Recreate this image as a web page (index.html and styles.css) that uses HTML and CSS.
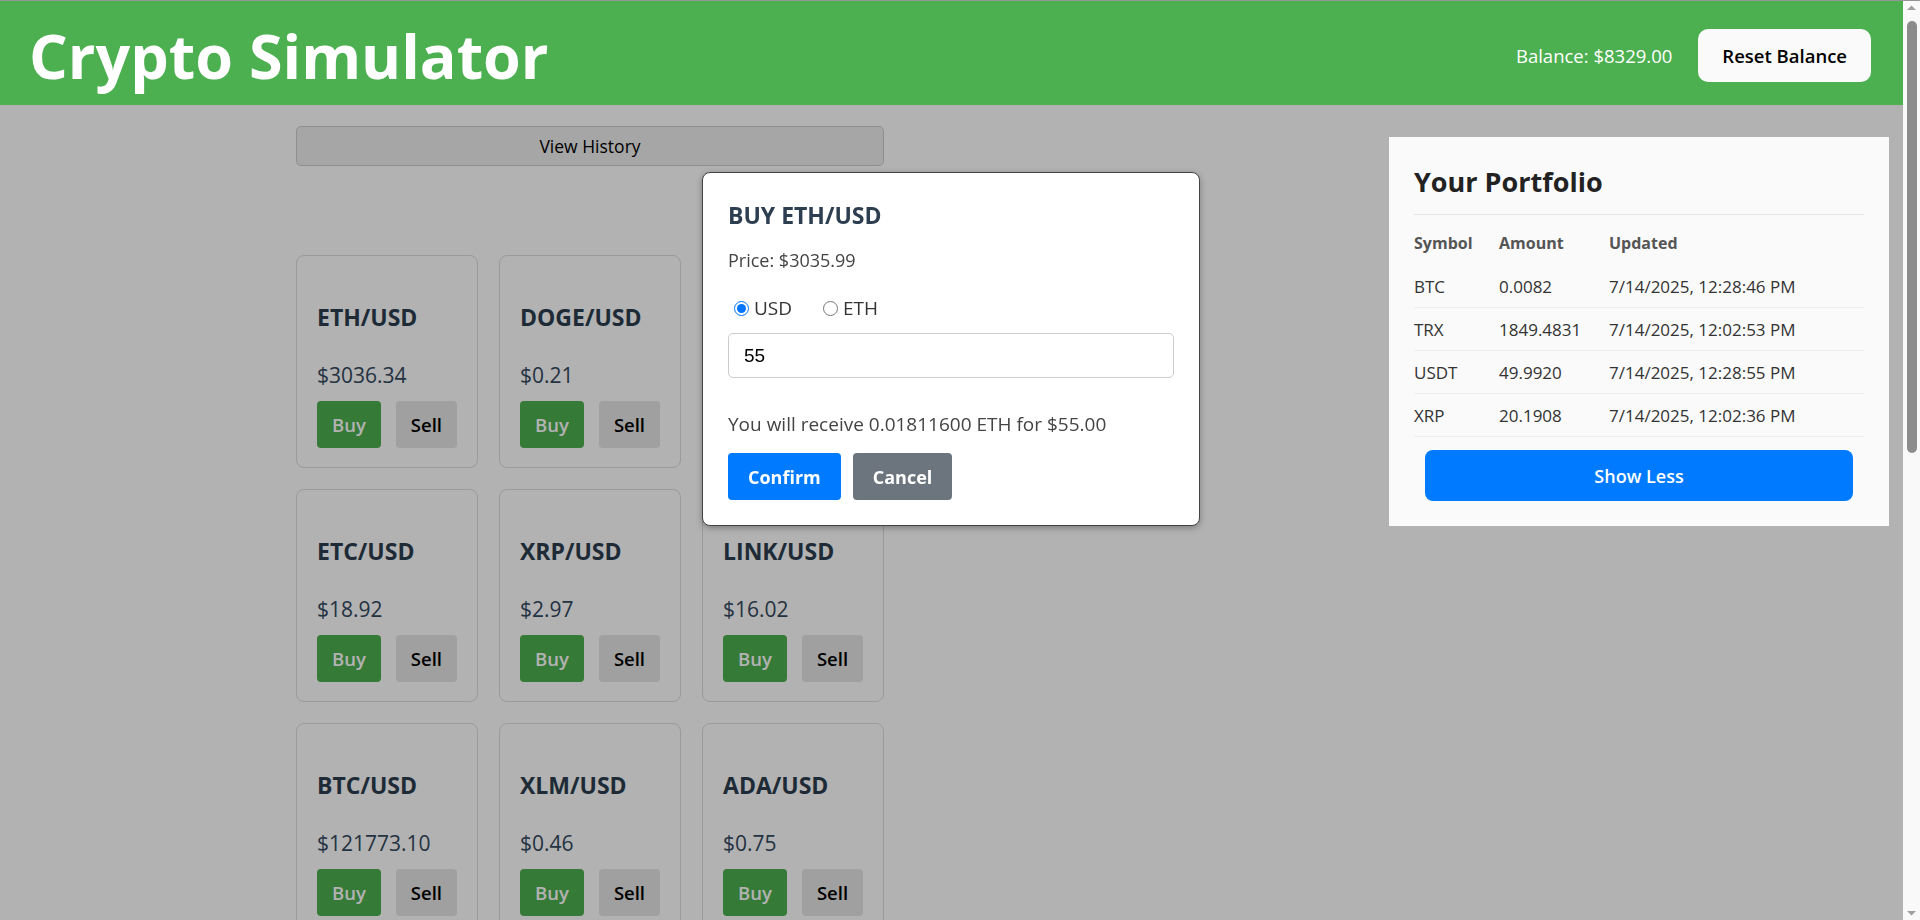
FILE: index.html
```html
<!DOCTYPE html>
<html lang="en">
<head>
<meta charset="utf-8">
<title>Crypto Simulator</title>
<link rel="stylesheet" href="styles.css">
</head>
<body>
<div class="page">
  <header class="topbar">
    <h1 class="brand">Crypto Simulator</h1>
    <div class="account">
      <span class="balance">Balance: $8329.00</span>
      <button class="btn-reset">Reset Balance</button>
    </div>
  </header>

  <div class="layout">
    <section class="market">
      <button class="btn-history">View History</button>
      <div class="cards">
        <div class="card"><h2 class="pair">ETH/USD</h2><p class="price">$3036.34</p><div class="actions"><button class="btn-buy">Buy</button><button class="btn-sell">Sell</button></div></div>
        <div class="card"><h2 class="pair">DOGE/USD</h2><p class="price">$0.21</p><div class="actions"><button class="btn-buy">Buy</button><button class="btn-sell">Sell</button></div></div>
        <div class="card"></div>
        <div class="card"><h2 class="pair">ETC/USD</h2><p class="price">$18.92</p><div class="actions"><button class="btn-buy">Buy</button><button class="btn-sell">Sell</button></div></div>
        <div class="card"><h2 class="pair">XRP/USD</h2><p class="price">$2.97</p><div class="actions"><button class="btn-buy">Buy</button><button class="btn-sell">Sell</button></div></div>
        <div class="card"><h2 class="pair">LINK/USD</h2><p class="price">$16.02</p><div class="actions"><button class="btn-buy">Buy</button><button class="btn-sell">Sell</button></div></div>
        <div class="card"><h2 class="pair">BTC/USD</h2><p class="price">$121773.10</p><div class="actions"><button class="btn-buy">Buy</button><button class="btn-sell">Sell</button></div></div>
        <div class="card"><h2 class="pair">XLM/USD</h2><p class="price">$0.46</p><div class="actions"><button class="btn-buy">Buy</button><button class="btn-sell">Sell</button></div></div>
        <div class="card"><h2 class="pair">ADA/USD</h2><p class="price">$0.75</p><div class="actions"><button class="btn-buy">Buy</button><button class="btn-sell">Sell</button></div></div>
      </div>
    </section>

    <aside class="portfolio">
      <h2 class="pf-title">Your Portfolio</h2>
      <div class="pf-table">
        <div class="pf-row pf-head"><span>Symbol</span><span>Amount</span><span>Updated</span></div>
        <div class="pf-row"><span>BTC</span><span>0.0082</span><span>7/14/2025, 12:28:46 PM</span></div>
        <div class="pf-row"><span>TRX</span><span>1849.4831</span><span>7/14/2025, 12:02:53 PM</span></div>
        <div class="pf-row"><span>USDT</span><span>49.9920</span><span>7/14/2025, 12:28:55 PM</span></div>
        <div class="pf-row"><span>XRP</span><span>20.1908</span><span>7/14/2025, 12:02:36 PM</span></div>
      </div>
      <button class="btn-less">Show Less</button>
    </aside>
  </div>
</div>

<div class="backdrop"></div>

<div class="modal">
  <h3 class="modal-title">BUY ETH/USD</h3>
  <p class="modal-price">Price: $3035.99</p>
  <div class="modal-opts">
    <label class="opt"><input type="radio" name="unit" checked> USD</label>
    <label class="opt"><input type="radio" name="unit"> ETH</label>
  </div>
  <input class="modal-input" type="text" value="55">
  <p class="modal-receive">You will receive 0.01811600 ETH for $55.00</p>
  <div class="modal-actions">
    <button class="btn-confirm">Confirm</button>
    <button class="btn-cancel">Cancel</button>
  </div>
</div>

<div class="scrollbar" aria-hidden="true">
  <svg class="sb-arrow" width="17" height="14" viewBox="0 0 17 14"><polygon points="4,9 8.5,4.5 13,9" fill="#a0a0a0"/></svg>
  <div class="sb-thumb"></div>
  <svg class="sb-arrow sb-down" width="17" height="14" viewBox="0 0 17 14"><polygon points="4,5 8.5,9.5 13,5" fill="#a0a0a0"/></svg>
</div>
</body>
</html>
```

FILE: styles.css
```css
html {
  border-top: 1px solid #d4d4d4;
}

body {
  margin: 0;
  font-family: "Open Sans", "Noto Sans", sans-serif;
  background: #ffffff;
  color: #333;
}

button {
  font-family: "Open Sans", "Noto Sans", sans-serif;
  cursor: pointer;
}

.page {
  width: 1903px;
}

/* ---------- top bar ---------- */
.topbar {
  position: relative;
  z-index: 20;
  height: 104px;
  box-sizing: border-box;
  padding: 5px 32px 0 29px;
  background: #4CAF50;
  display: flex;
  align-items: center;
  justify-content: space-between;
}

.brand {
  margin: 0;
  color: #fff;
  font-size: 61px;
  font-weight: 700;
  line-height: 1;
}

.account {
  display: flex;
  align-items: center;
  gap: 26px;
}

.balance {
  color: #fff;
  font-size: 18.5px;
}

.btn-reset {
  height: 53px;
  padding: 0 24px;
  border: none;
  border-radius: 10px;
  background: #fafafa;
  color: #000;
  font-size: 18.5px;
  font-weight: 600;
}

/* ---------- layout ---------- */
.layout {
  padding: 0 14px 0 296px;
  display: flex;
  align-items: flex-start;
  justify-content: space-between;
}

.market {
  width: 588px;
  padding-top: 21px;
}

.btn-history {
  display: block;
  width: 100%;
  height: 40px;
  border: 1px solid #cccccc;
  border-radius: 5px;
  background: #eeeeee;
  color: #000;
  font-size: 17.5px;
}

.cards {
  margin-top: 89px;
  display: grid;
  grid-template-columns: repeat(3, 1fr);
  gap: 21px;
}

.card {
  border: 1px solid #dddddd;
  border-radius: 8px;
  background: #fff;
  padding: 20px 20px 19px;
}

.pair {
  margin: 26px 0 0;
  font-size: 23px;
  line-height: 30px;
  font-weight: 700;
  color: #2c3e50;
}

.price {
  margin: 29px 0 0;
  font-size: 21px;
  line-height: 28px;
  color: #34495e;
}

.actions {
  margin-top: 12px;
  display: flex;
  gap: 15px;
}

.btn-buy,
.btn-sell {
  height: 47px;
  padding: 0 15px;
  border: none;
  border-radius: 4px;
  font-size: 18.5px;
  font-weight: 600;
}

.btn-buy {
  background: #4CAF50;
  color: #fff;
}

.btn-sell {
  background: #e5e5e5;
  color: #000;
}

/* ---------- portfolio ---------- */
.portfolio {
  position: relative;
  z-index: 20;
  width: 500px;
  box-sizing: border-box;
  margin-top: 32px;
  padding: 25px;
  background: #fafafa;
}

.pf-title {
  margin: 0;
  padding-bottom: 12px;
  border-bottom: 1px solid #e6e6e6;
  font-size: 27px;
  line-height: 40px;
  font-weight: 700;
  color: #222;
}

.pf-table {
  margin-top: 6px;
}

.pf-row {
  display: grid;
  grid-template-columns: 85px 110px 1fr;
  padding-top: 2px;
  line-height: 40px;
  font-size: 17px;
  color: #333;
  border-bottom: 1px solid #eeeeee;
}

.pf-head {
  padding-bottom: 2px;
  border-bottom: none;
  font-size: 16px;
  font-weight: 700;
  color: #555;
}

.btn-less {
  display: block;
  width: 95%;
  height: 51px;
  margin: 13px auto 0;
  border: none;
  border-radius: 8px;
  background: #007bff;
  color: #fff;
  font-size: 18px;
  font-weight: 600;
}

/* ---------- modal ---------- */
.backdrop {
  position: fixed;
  inset: 0;
  z-index: 10;
  background: rgba(0, 0, 0, 0.3);
}

.modal {
  position: fixed;
  z-index: 30;
  top: 172px;
  left: 702px;
  width: 498px;
  box-sizing: border-box;
  padding: 25px;
  border: 1px solid #444;
  border-radius: 8px;
  background: #fff;
  box-shadow: 0 2px 6px rgba(0, 0, 0, 0.3);
}

.modal-title {
  margin: 3px 0 0;
  font-size: 23px;
  line-height: 28px;
  font-weight: 700;
  color: #2c3e50;
}

.modal-price {
  margin: 19px 0 0;
  font-size: 18px;
  line-height: 24px;
  color: #444;
}

.modal-opts {
  margin-top: 24px;
  display: flex;
  gap: 25px;
  font-size: 19px;
  line-height: 24px;
  color: #333;
}

.opt {
  display: flex;
  align-items: center;
}

.opt input {
  width: 15px;
  height: 15px;
  margin: 0 5px 0 6px;
  accent-color: #0075ff;
}

.modal-input {
  display: block;
  width: 100%;
  height: 45px;
  box-sizing: border-box;
  margin-top: 13px;
  padding: 0 15px;
  border: 1px solid #cccccc;
  border-radius: 5px;
  font-family: "Liberation Sans", Arial, sans-serif;
  font-size: 19px;
  color: #000;
}

.modal-receive {
  margin: 34px 0 0;
  font-size: 19px;
  line-height: 24px;
  color: #444;
}

.modal-actions {
  margin-top: 17px;
  display: flex;
  gap: 12px;
}

.btn-confirm,
.btn-cancel {
  height: 47px;
  padding: 0 20px;
  border: none;
  border-radius: 4px;
  color: #fff;
  font-size: 18px;
  font-weight: 700;
}

.btn-confirm {
  background: #007bff;
}

.btn-cancel {
  background: #6c757d;
}

/* ---------- window scrollbar (as in the capture) ---------- */
.scrollbar {
  position: fixed;
  z-index: 50;
  top: 1px;
  right: 0;
  bottom: 0;
  width: 17px;
  background: #f9f9f9;
  display: flex;
  flex-direction: column;
  align-items: center;
}

.sb-arrow {
  display: block;
  flex: none;
}

.sb-thumb {
  width: 10px;
  height: 432px;
  margin-top: 6px;
  border-radius: 5px;
  background: #8c8c8c;
}

.sb-down {
  margin-top: auto;
}
```
